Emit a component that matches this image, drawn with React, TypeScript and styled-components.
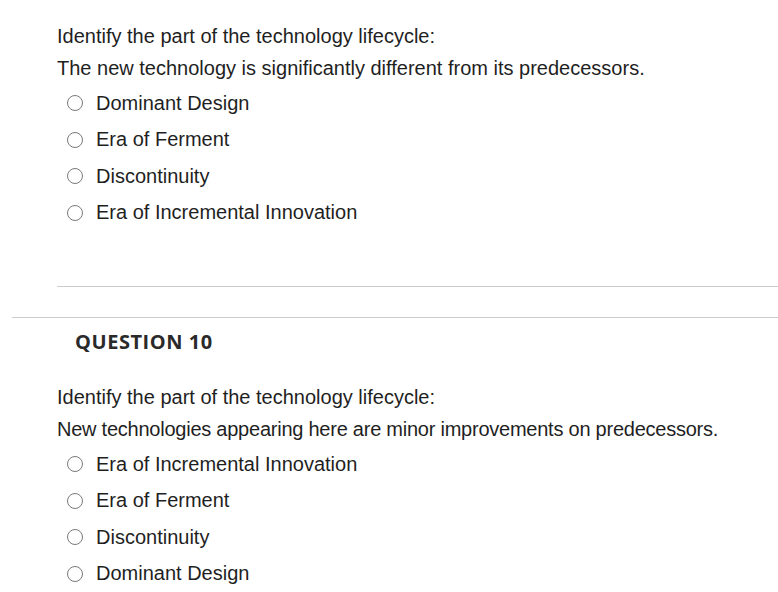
import styled, { createGlobalStyle } from "styled-components";

const GlobalStyle = createGlobalStyle`
  html, body {
    margin: 0;
    padding: 0;
    background: #ffffff;
  }
  body {
    font-family: "Liberation Sans", Arial, sans-serif;
    color: #222222;
  }
`;

const Page = styled.div`
  width: 778px;
  padding-top: 20px;
`;

const QuestionBlock = styled.div`
  padding-left: 57px;
`;

const Prompt = styled.div<{ $tracking?: number }>`
  font-size: 20px;
  line-height: 32px;
  color: #1f1f1f;
  white-space: nowrap;
  letter-spacing: ${({ $tracking = 0 }) => $tracking}px;
`;

const Options = styled.div`
  display: flex;
  flex-direction: column;
  padding-left: 10px;
  margin-top: 1px;
`;

const OptionRow = styled.label`
  display: flex;
  align-items: center;
  gap: 13px;
  height: 36.5px;
  font-size: 20px;
  color: #1f1f1f;
`;

const Radio = styled.span`
  width: 16px;
  height: 16px;
  box-sizing: border-box;
  border: 1.5px solid #7a7a7a;
  border-radius: 50%;
  flex-shrink: 0;
`;

const Rule = styled.hr<{ $inset: number }>`
  border: none;
  border-top: 1px solid #cccccc;
  margin: 0 0 0 ${({ $inset }) => $inset}px;
`;

const Spacer = styled.div<{ $h: number }>`
  height: ${({ $h }) => $h}px;
`;

const QuestionTitle = styled.div`
  font-family: "Open Sans", sans-serif;
  font-weight: 700;
  font-size: 20px;
  line-height: 28px;
  color: #2a2a2a;
  padding-left: 75px;
  letter-spacing: 0.55px;
`;

type Line = { text: string; tracking?: number };

type Question = {
  lines: Line[];
  options: string[];
};

const q9: Question = {
  lines: [
    { text: "Identify the part of the technology lifecycle:" },
    { text: "The new technology is significantly different from its predecessors." },
  ],
  options: [
    "Dominant Design",
    "Era of Ferment",
    "Discontinuity",
    "Era of Incremental Innovation",
  ],
};

const q10: Question = {
  lines: [
    { text: "Identify the part of the technology lifecycle:" },
    {
      text: "New technologies appearing here are minor improvements on predecessors.",
      tracking: -0.24,
    },
  ],
  options: [
    "Era of Incremental Innovation",
    "Era of Ferment",
    "Discontinuity",
    "Dominant Design",
  ],
};

function QuestionBody({ q }: { q: Question }) {
  return (
    <QuestionBlock>
      {q.lines.map((l) => (
        <Prompt key={l.text} $tracking={l.tracking}>
          {l.text}
        </Prompt>
      ))}
      <Options>
        {q.options.map((o) => (
          <OptionRow key={o}>
            <Radio />
            {o}
          </OptionRow>
        ))}
      </Options>
    </QuestionBlock>
  );
}

export default function App() {
  return (
    <>
      <GlobalStyle />
      <Page>
        <QuestionBody q={q9} />
        <Spacer $h={55} />
        <Rule $inset={57} />
        <Spacer $h={30} />
        <Rule $inset={12} />
        <Spacer $h={10} />
        <QuestionTitle>QUESTION 10</QuestionTitle>
        <Spacer $h={25} />
        <QuestionBody q={q10} />
      </Page>
    </>
  );
}
